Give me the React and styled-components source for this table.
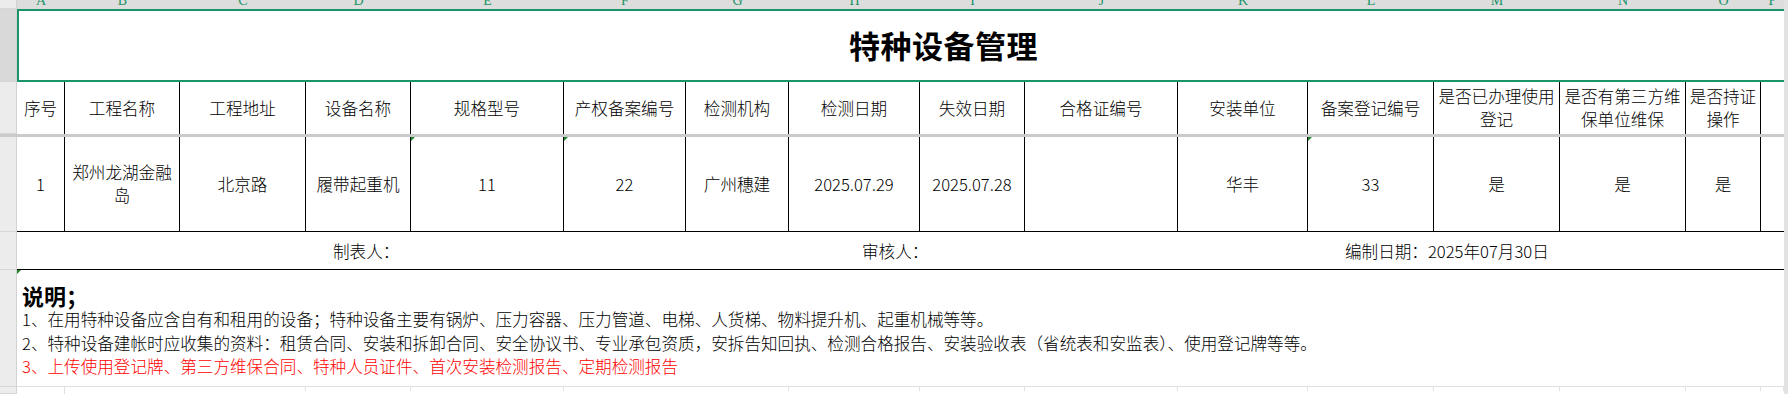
import React from "react";
import styled, { createGlobalStyle, css } from "styled-components";

const GREEN = "#1b9467";
const COLS =
  "48px 115px 126px 105px 153px 122px 103px 131px 105px 153px 130px 126px 126px 126px 75px 1fr";

const GlobalStyle = createGlobalStyle`
  html, body {
    margin: 0;
    padding: 0;
    background: #ffffff;
  }
  body {
    font-family: "Noto Sans CJK SC", "Noto Sans", sans-serif;
    color: #000;
  }
`;

const Window = styled.div`
  display: flex;
  width: 100vw;
  height: 394px;
  overflow: hidden;
`;

const Sheet = styled.div`
  flex: 1;
  min-width: 0;
  display: flex;
  flex-direction: column;
`;

const ScrollEdge = styled.div`
  width: 4px;
  flex: none;
  background: #e3e3e3;
`;

const Row = styled.div`
  display: flex;
  flex: none;
  height: ${(p) => p.$h}px;
  ${(p) => p.$grow && "flex: 1;"}
`;

const Gutter = styled.div`
  width: 17px;
  flex: none;
  box-sizing: border-box;
  background: ${(p) => (p.$selected ? "#d9d9d9" : "#ececec")};
  border-right: 1px solid #d2d2d2;
  border-bottom: 1px solid #d6d6d6;
`;

const Grid = styled.div`
  flex: 1;
  min-width: 0;
  display: grid;
  grid-template-columns: ${COLS};
  box-sizing: border-box;
  ${(p) => p.$line && `border-bottom: 1px solid ${p.$line};`}
`;

const ColHeads = styled(Grid)`
  background: #dddddd;
  overflow: hidden;
`;

const ColLetter = styled.div`
  text-align: center;
  font-family: "Liberation Serif", serif;
  font-size: 14px;
  line-height: 14px;
  margin-top: -6px;
  color: ${GREEN};
`;

const TitleCell = styled.div`
  flex: 1;
  box-sizing: border-box;
  border: 2px solid ${GREEN};
  border-right: none;
  display: flex;
  align-items: center;
  justify-content: center;
  padding-left: 84px;
  padding-bottom: 2px;
  font-size: 31px;
  font-weight: 700;
  letter-spacing: 0.5px;
`;

const Cell = styled.div`
  position: relative;
  box-sizing: border-box;
  display: flex;
  align-items: center;
  justify-content: center;
  text-align: center;
  padding: 0 2px;
  font-size: 16.6px;
  line-height: 23px;
  font-weight: 300;
  ${(p) => !p.$open && "border-right: 1px solid #000;"}
  ${(p) =>
    p.$flag &&
    css`
      &::before {
        content: "";
        position: absolute;
        left: 0;
        top: 0;
        border-top: 4px solid #1f8a2a;
        border-right: 4px solid transparent;
      }
    `}
`;

const Frozen = styled.div`
  height: 3px;
  flex: none;
  background: #cbcbcb;
`;

const Label = styled.div`
  grid-column: ${(p) => p.$col} / span 4;
  align-self: center;
  padding-left: ${(p) => p.$indent}px;
  font-size: 16.6px;
  font-weight: 300;
  white-space: nowrap;
`;

const Notes = styled.div`
  position: relative;
  flex: 1;
  box-sizing: border-box;
  padding: 13px 0 0 5px;
  border-bottom: 1px solid #e0e0e0;
  &::before {
    content: "";
    position: absolute;
    left: 0;
    top: 0;
    border-top: 4px solid #1f8a2a;
    border-right: 4px solid transparent;
  }
`;

const NotesTitle = styled.div`
  font-size: 22px;
  line-height: 25px;
  font-weight: 700;
`;

const NoteLine = styled.div`
  font-size: 16.6px;
  line-height: 23.5px;
  font-weight: 300;
  white-space: nowrap;
  color: ${(p) => (p.$red ? "#ff0000" : "#000")};
`;

const Blank = styled.div`
  grid-column: span ${(p) => p.$span || 1};
  border-right: 1px solid #e0e0e0;
`;

const letters = "ABCDEFGHIJKLMNOP".split("");

const headers = [
  "序号",
  "工程名称",
  "工程地址",
  "设备名称",
  "规格型号",
  "产权备案编号",
  "检测机构",
  "检测日期",
  "失效日期",
  "合格证编号",
  "安装单位",
  "备案登记编号",
  "是否已办理使用登记",
  "是否有第三方维保单位维保",
  "是否持证操作",
];

const record = [
  { v: "1" },
  { v: "郑州龙湖金融岛" },
  { v: "北京路" },
  { v: "履带起重机" },
  { v: "11", flag: true },
  { v: "22", flag: true },
  { v: "广州穗建" },
  { v: "2025.07.29" },
  { v: "2025.07.28" },
  { v: "" },
  { v: "华丰" },
  { v: "33", flag: true },
  { v: "是" },
  { v: "是" },
  { v: "是" },
];

const blankSpans = [1, 2, 1, 1, 2, 1, 1, 1, 1, 1, 1, 1, 1, 1, 1];

export default function App() {
  return (
    <>
      <GlobalStyle />
      <Window>
        <Sheet>
          <Row $h={9}>
            <Gutter />
            <ColHeads>
              {letters.map((l) => (
                <ColLetter key={l}>{l}</ColLetter>
              ))}
            </ColHeads>
          </Row>

          <Row $h={73}>
            <Gutter $selected />
            <TitleCell>特种设备管理</TitleCell>
          </Row>

          <Row $h={52}>
            <Gutter />
            <Grid>
              {headers.map((h) => (
                <Cell key={h}>{h}</Cell>
              ))}
              <Cell $open />
            </Grid>
          </Row>

          <Frozen />

          <Row $h={95}>
            <Gutter />
            <Grid $line="#000">
              {record.map((c, i) => (
                <Cell key={i} $flag={c.flag}>
                  {c.v}
                </Cell>
              ))}
              <Cell $open />
            </Grid>
          </Row>

          <Row $h={38}>
            <Gutter />
            <Grid $line="#000">
              <Label $col={4} $indent={27}>
                制表人：
              </Label>
              <Label $col={8} $indent={73}>
                审核人：
              </Label>
              <Label $col={12} $indent={37}>
                编制日期：2025年07月30日
              </Label>
            </Grid>
          </Row>

          <Row $h={117}>
            <Gutter />
            <Notes>
              <NotesTitle>说明；</NotesTitle>
              <NoteLine>
                1、在用特种设备应含自有和租用的设备；特种设备主要有锅炉、压力容器、压力管道、电梯、人货梯、物料提升机、起重机械等等。
              </NoteLine>
              <NoteLine>
                2、特种设备建帐时应收集的资料：租赁合同、安装和拆卸合同、安全协议书、专业承包资质，安拆告知回执、检测合格报告、安装验收表（省统表和安监表）、使用登记牌等等。
              </NoteLine>
              <NoteLine $red>
                3、上传使用登记牌、第三方维保合同、特种人员证件、首次安装检测报告、定期检测报告
              </NoteLine>
            </Notes>
          </Row>

          <Row $grow>
            <Gutter />
            <Grid>
              {blankSpans.map((s, i) => (
                <Blank key={i} $span={s} />
              ))}
            </Grid>
          </Row>
        </Sheet>
        <ScrollEdge />
      </Window>
    </>
  );
}
